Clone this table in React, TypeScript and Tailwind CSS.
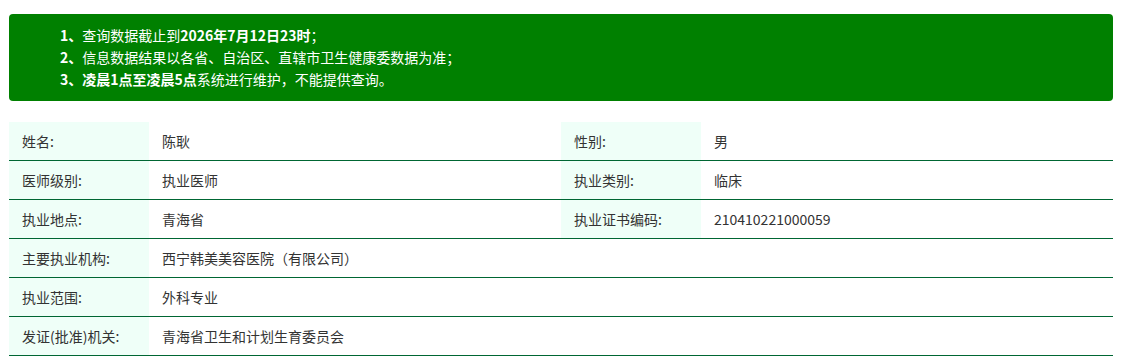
import type { ReactNode } from 'react';

interface Field {
  label: string;
  value: string;
}

const rows: (Field | [Field, Field])[] = [
  [
    { label: '姓名:', value: '陈耿' },
    { label: '性别:', value: '男' },
  ],
  [
    { label: '医师级别:', value: '执业医师' },
    { label: '执业类别:', value: '临床' },
  ],
  [
    { label: '执业地点:', value: '青海省' },
    { label: '执业证书编码:', value: '210410221000059' },
  ],
  { label: '主要执业机构:', value: '西宁韩美美容医院（有限公司）' },
  { label: '执业范围:', value: '外科专业' },
  { label: '发证(批准)机关:', value: '青海省卫生和计划生育委员会' },
];

function Label({ children }: { children: ReactNode }) {
  return (
    <div className="bg-[#effff8] pl-[13px] flex items-center">{children}</div>
  );
}

function Value({ children, wide }: { children: ReactNode; wide?: boolean }) {
  return (
    <div className={`pl-[13px] flex items-center ${wide ? 'col-span-3' : ''}`}>
      {children}
    </div>
  );
}

function App() {
  return (
    <div
      className="min-h-screen bg-white pt-[14px] pl-[9px] pr-[13px] text-[14px] text-[#333]"
      style={{ fontFamily: '"Noto Sans CJK SC", "Noto Sans", sans-serif' }}
    >
      <div className="bg-[#008000] rounded-[4px] text-white pl-[51px] pt-[10px] pb-[11px] leading-[22px]">
        <p>
          <b>1、</b>查询数据截止到<b>2026年7月12日23时</b>；
        </p>
        <p>
          <b>2、</b>信息数据结果以各省、自治区、直辖市卫生健康委数据为准；
        </p>
        <p>
          <b>3、凌晨1点至凌晨5点</b>系统进行维护，不能提供查询。
        </p>
      </div>

      <div className="mt-[21px]">
        {rows.map((row, i) => (
          <div
            key={i}
            className="grid grid-cols-[140px_412px_140px_412px] h-[39px] border-b border-[#006633]"
          >
            {Array.isArray(row) ? (
              <>
                <Label>{row[0].label}</Label>
                <Value>{row[0].value}</Value>
                <Label>{row[1].label}</Label>
                <Value>{row[1].value}</Value>
              </>
            ) : (
              <>
                <Label>{row.label}</Label>
                <Value wide>{row.value}</Value>
              </>
            )}
          </div>
        ))}
      </div>
    </div>
  );
}

export default App;
